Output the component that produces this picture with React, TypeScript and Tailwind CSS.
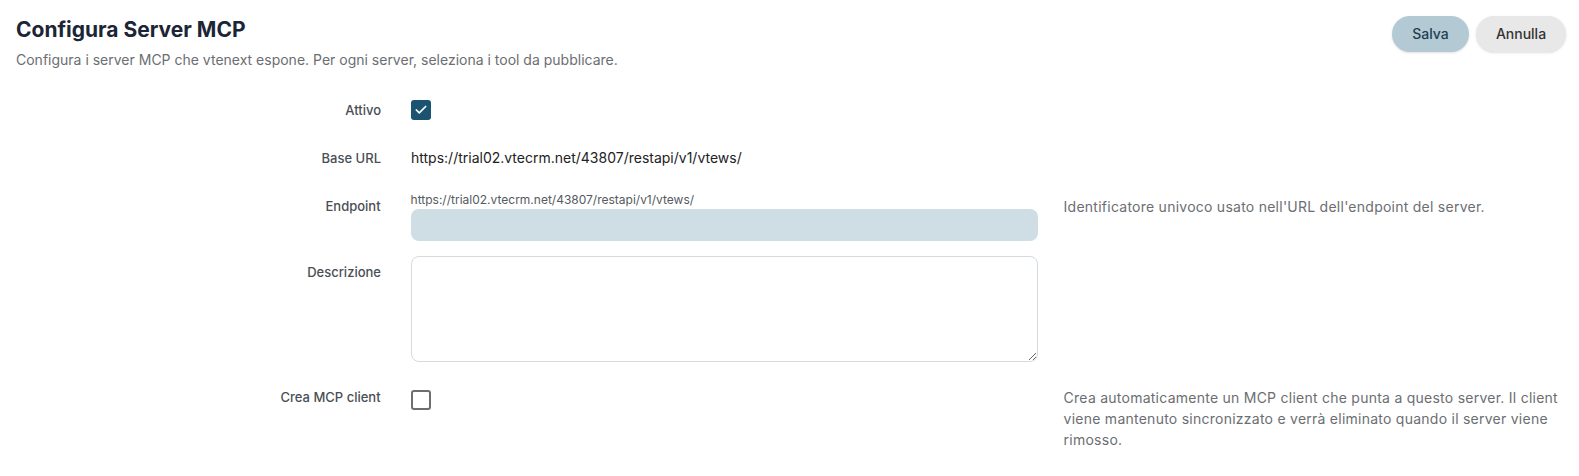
import { Check } from "lucide-react";

function Row({ label, labelPad, children, help, helpPad }: {
  label: string;
  labelPad: string;
  children: React.ReactNode;
  help?: React.ReactNode;
  helpPad?: string;
}) {
  return (
    <div className="flex">
      <div className={`w-[365px] text-right text-[13px] leading-5 font-medium text-[#4a4f55] ${labelPad}`}>{label}</div>
      <div className="w-[627px] ml-[30px] shrink-0">{children}</div>
      {help && (
        <div className={`ml-[26px] w-[500px] text-[14px] tracking-[0.25px] leading-[21px] text-[#6b6e72] ${helpPad ?? ""}`}>{help}</div>
      )}
    </div>
  );
}

export default function App() {
  return (
    <div className="min-h-[476px] bg-white px-4 pt-4 font-['Inter',sans-serif]">
      <div className="flex justify-between">
        <div>
          <h1 className="text-[21px] leading-7 font-bold text-[#1b2536]">Configura Server MCP</h1>
          <p className="mt-[6px] text-[14px] leading-5 text-[#6b6e72]">
            Configura i server MCP che vtenext espone. Per ogni server, seleziona i tool da pubblicare.
          </p>
        </div>
        <div className="flex gap-[7px] mr-[-3px]">
          <button className="h-9 w-[77px] rounded-full bg-[#b3cad4] text-sm font-medium text-[#1f3f52] shadow-sm">Salva</button>
          <button className="h-9 w-[90px] rounded-full bg-[#e8e8e8] text-sm font-medium text-[#333] shadow-sm">Annulla</button>
        </div>
      </div>

      <div className="mt-[30px] flex flex-col">
        <Row label="Attivo" labelPad="">
          <div className="flex h-5 w-5 items-center justify-center rounded-[3px] bg-[#1b5470]">
            <Check className="h-[14px] w-[14px] text-white" strokeWidth={3} />
          </div>
        </Row>

        <div className="mt-[28px]">
          <Row label="Base URL" labelPad="">
            <div className="text-sm leading-5 text-[#222]">https://trial02.vtecrm.net/43807/restapi/v1/vtews/</div>
          </Row>
        </div>

        <div className="mt-[24px]">
          <Row label="Endpoint" labelPad="pt-1" help="Identificatore univoco usato nell'URL dell'endpoint del server." helpPad="pt-[4px]">
            <div className="text-[12px] leading-4 text-[#555a60]">https://trial02.vtecrm.net/43807/restapi/v1/vtews/</div>
            <div className="mt-px h-8 rounded-lg bg-[#cfdee4]" />
          </Row>
        </div>

        <div className="mt-[15px]">
          <Row label="Descrizione" labelPad="pt-[6px]">
            <textarea className="block h-[106px] w-full rounded-lg border border-[#d3dae0] bg-white outline-none" />
          </Row>
        </div>

        <div className="mt-[25px]">
          <Row
            label="Crea MCP client"
            labelPad=""
            help="Crea automaticamente un MCP client che punta a questo server. Il client viene mantenuto sincronizzato e verrà eliminato quando il server viene rimosso."
          >
            <div className="mt-[3px] h-5 w-5 rounded-[3px] border-2 border-[#6e6e6e] bg-white" />
          </Row>
        </div>
      </div>
    </div>
  );
}
